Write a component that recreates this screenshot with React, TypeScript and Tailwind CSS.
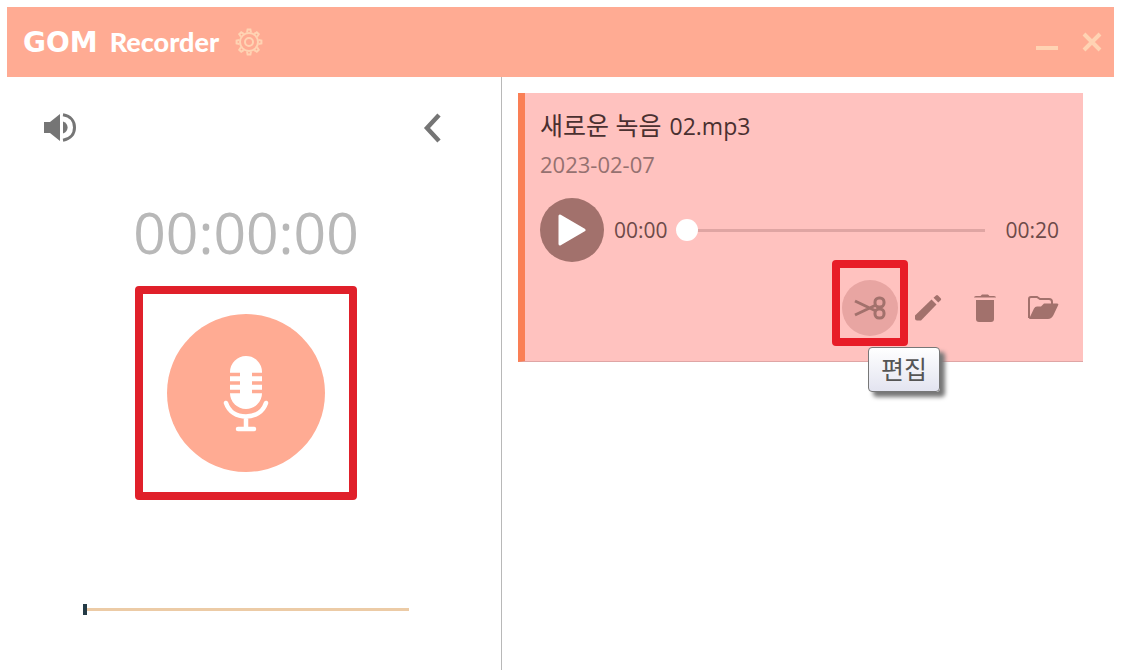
import { useState } from "react";

const iconTone = "text-[#a2716c]";

function GearIcon() {
  return (
    <svg viewBox="0 0 28 28" className="size-7" fill="none" stroke="currentColor" strokeWidth="2" aria-hidden="true">
      <circle cx="14" cy="14" r="9" />
      <circle cx="14" cy="14" r="4" />
      {[0, 45, 90, 135, 180, 225, 270, 315].map((angle) => (
        <path key={angle} d="M12 4.6 12.6 1.6h2.8L16 4.6" transform={`rotate(${angle} 14 14)`} />
      ))}
    </svg>
  );
}

function SpeakerIcon() {
  return (
    <svg viewBox="0 0 34 32" className="h-8 w-[34px]" fill="currentColor" aria-hidden="true">
      <path d="M1 10h6l10-8v27L7 21H1z" />
      <path d="M20 9.5c3.2 1.2 4.6 3.4 4.6 6s-1.4 4.8-4.6 6z" />
      <path d="M20 2.8c8 1.2 11.5 6.7 11.5 12.7S28 27 20 28.2" fill="none" stroke="currentColor" strokeWidth="3" />
    </svg>
  );
}

function MicIcon() {
  return (
    <svg viewBox="0 0 46 78" className="h-[78px] w-[46px]" aria-hidden="true">
      <path d="M7 18a16 16 0 0 1 32 0v21a16 16 0 0 1-32 0z" fill="#fff" />
      <path d="M7 20.5h10M7 29h10M7 37.5h10M29 20.5h10M29 29h10M29 37.5h10" stroke="#ffab93" strokeWidth="3.5" />
      <path d="M3 49c3 9 11 13.5 20 13.5s17-4.5 20-13.5M23 63v12M15 75h16" fill="none" stroke="#fff" strokeWidth="4.5" strokeLinecap="round" />
    </svg>
  );
}

function ScissorsIcon() {
  return (
    <svg viewBox="0 0 32 26" className="h-[26px] w-8" fill="none" stroke="currentColor" strokeWidth="3" aria-hidden="true">
      <path d="M1 6 22 16M1 20 22 10" />
      <rect x="21" y="3" width="9" height="9" rx="4" />
      <rect x="21" y="14" width="9" height="9" rx="4" />
    </svg>
  );
}

function PencilIcon() {
  return (
    <svg viewBox="0 0 28 28" className="size-7" fill="currentColor" aria-hidden="true">
      <path d="M1 21.5 17.5 5.5l5 5L7 26.5H3q-2 0-2-2z" />
      <path d="M19.5 3.8 22 1.5q1-1 2 0l2.7 2.7q1 1 0 2L24.3 8.5z" />
    </svg>
  );
}

function TrashIcon() {
  return (
    <svg viewBox="0 0 24 30" className="h-[30px] w-6" fill="currentColor" aria-hidden="true">
      <path d="M1 4.5q0-1.5 2-1.5h4.5L9 1.5h6L16.5 3H21q2 0 2 1.5z" />
      <path d="M3 7h18v19q0 3-3 3H6q-3 0-3-3z" />
    </svg>
  );
}

function FolderIcon() {
  return (
    <svg viewBox="0 0 32 26" className="h-[26px] w-8" aria-hidden="true">
      <path d="M2 23V4q0-2 2-2h6l3 2h9q3 0 3 3v3" fill="none" stroke="currentColor" strokeWidth="2" />
      <path d="M2 24 7 13.5Q8 11.5 10 11.5h4l3-3h13q2 0 1 2L26.5 20q-2 4-5.5 4z" fill="currentColor" />
    </svg>
  );
}

function TitleBar() {
  return (
    <header className="flex h-[70px] items-center bg-[#ffab93] pr-3 pl-4 text-[#ffd3b3]">
      <h1 className="flex items-baseline gap-3 text-white">
        <span className="font-['DejaVu_Sans',sans-serif] text-[28px] leading-8 font-bold">GOM</span>
        <span className="font-[Lato,sans-serif] text-[27px] leading-8 font-black">Recorder</span>
      </h1>
      <button type="button" aria-label="Settings" className="ml-4">
        <GearIcon />
      </button>
      <div className="ml-auto flex items-center gap-6">
        <button type="button" aria-label="Minimize">
          <svg viewBox="0 0 22 20" className="h-5 w-[22px]" stroke="currentColor" strokeWidth="4" aria-hidden="true">
            <path d="M0 16h22" />
          </svg>
        </button>
        <button type="button" aria-label="Close">
          <svg viewBox="0 0 20 20" className="size-5" stroke="currentColor" strokeWidth="4" aria-hidden="true">
            <path d="m2 2 16 16M18 2 2 18" />
          </svg>
        </button>
      </div>
    </header>
  );
}

function RecordPanel() {
  const [level, setLevel] = useState(0);

  return (
    <section className="flex w-[495px] shrink-0 flex-col items-center border-r border-[#b8b8b8] pt-[35px] pr-[52px] pl-9">
      <div className="flex w-full items-center justify-between text-[#757575]">
        <button type="button" aria-label="Volume">
          <SpeakerIcon />
        </button>
        <button type="button" aria-label="Collapse list" className="mr-2">
          <svg viewBox="0 0 18 30" className="h-[30px] w-[18px]" fill="none" stroke="currentColor" strokeWidth="4.5" aria-hidden="true">
            <path d="M16 2 4 15l12 13" />
          </svg>
        </button>
      </div>
      <time className="mt-14 text-[57px] leading-16 text-[#b8b8b8]">00:00:00</time>
      <div className="mt-[22px] flex h-[214px] w-[222px] items-center justify-center rounded border-8 border-[#e0202a]">
        <button type="button" aria-label="Record" className="flex size-[158px] items-center justify-center rounded-full bg-[#ffab93]">
          <MicIcon />
        </button>
      </div>
      <input
        type="range"
        aria-label="Input level"
        value={level}
        onChange={(e) => setLevel(Number(e.target.value))}
        className="mt-[103px] h-3 w-[326px] appearance-none bg-transparent [&::-webkit-slider-runnable-track]:h-[3px] [&::-webkit-slider-runnable-track]:bg-[#eccba6] [&::-webkit-slider-thumb]:-mt-1 [&::-webkit-slider-thumb]:h-[11px] [&::-webkit-slider-thumb]:w-1 [&::-webkit-slider-thumb]:appearance-none [&::-webkit-slider-thumb]:bg-[#243b46]"
      />
    </section>
  );
}

function RecordingCard() {
  const [position, setPosition] = useState(0);

  return (
    <article className="border-b border-l-7 border-b-[#dfa5a5] border-l-[#fa7f55] bg-[#ffc2bf] pt-[14px] pr-6 pb-[25px] pl-[15px]">
      <h2 className="flex items-baseline gap-2 text-[23px] leading-9 text-[#4a3030]">
        <span className="text-[25px]">새로운 녹음</span>
        <span>02.mp3</span>
      </h2>
      <p className="mt-1 text-[22px] leading-8 text-[#957170]">2023-02-07</p>
      <div className="mt-[18px] flex items-center text-[21px] leading-8 text-[#6d4a49]">
        <button type="button" aria-label="Play" className="mr-[10px] flex size-16 items-center justify-center rounded-full bg-[#a2716c]">
          <svg viewBox="0 0 28 32" className="h-8 w-7" fill="#fff" stroke="#fff" strokeWidth="3" strokeLinejoin="round" aria-hidden="true">
            <path d="M2 2v28l24-14z" />
          </svg>
        </button>
        <span>00:00</span>
        <input
          type="range"
          aria-label="Playback position"
          value={position}
          onChange={(e) => setPosition(Number(e.target.value))}
          className="mr-5 ml-2 h-6 min-w-0 flex-1 appearance-none bg-transparent [&::-webkit-slider-runnable-track]:h-[3px] [&::-webkit-slider-runnable-track]:bg-[#dfa5a3] [&::-webkit-slider-thumb]:-mt-[10px] [&::-webkit-slider-thumb]:size-[22px] [&::-webkit-slider-thumb]:appearance-none [&::-webkit-slider-thumb]:rounded-full [&::-webkit-slider-thumb]:bg-white"
        />
        <span>00:20</span>
      </div>
      <div className={`mt-[18px] flex items-center justify-end ${iconTone}`}>
        <div className="relative mr-4">
          <button type="button" aria-label="편집" aria-describedby="edit-tip" className="flex size-14 items-center justify-center rounded-full bg-[#e8a5a2]">
            <ScissorsIcon />
          </button>
          <span className="pointer-events-none absolute -inset-x-[10px] -top-5 -bottom-[10px] rounded border-8 border-[#e81c27]" />
          <span
            id="edit-tip"
            role="tooltip"
            className="absolute top-[67px] left-[26px] w-[72px] rounded border border-[#777] bg-linear-to-b from-white to-[#e3e4f0] text-center text-[25px] leading-[43px] text-[#555] shadow-[5px_5px_4px_#777]"
          >
            편집
          </span>
        </div>
        <button type="button" aria-label="Rename" className="mr-[31px]">
          <PencilIcon />
        </button>
        <button type="button" aria-label="Delete" className="mr-[30px]">
          <TrashIcon />
        </button>
        <button type="button" aria-label="Open folder">
          <FolderIcon />
        </button>
      </div>
    </article>
  );
}

export default function App() {
  return (
    <div className="flex min-h-screen flex-col bg-white pt-[7px] pr-2 pl-[7px] font-['Open_Sans','Noto_Sans_CJK_KR',sans-serif]">
      <TitleBar />
      <main className="flex flex-1">
        <RecordPanel />
        <section className="min-w-0 flex-1 pt-4 pr-[31px] pl-4">
          <RecordingCard />
        </section>
      </main>
    </div>
  );
}
